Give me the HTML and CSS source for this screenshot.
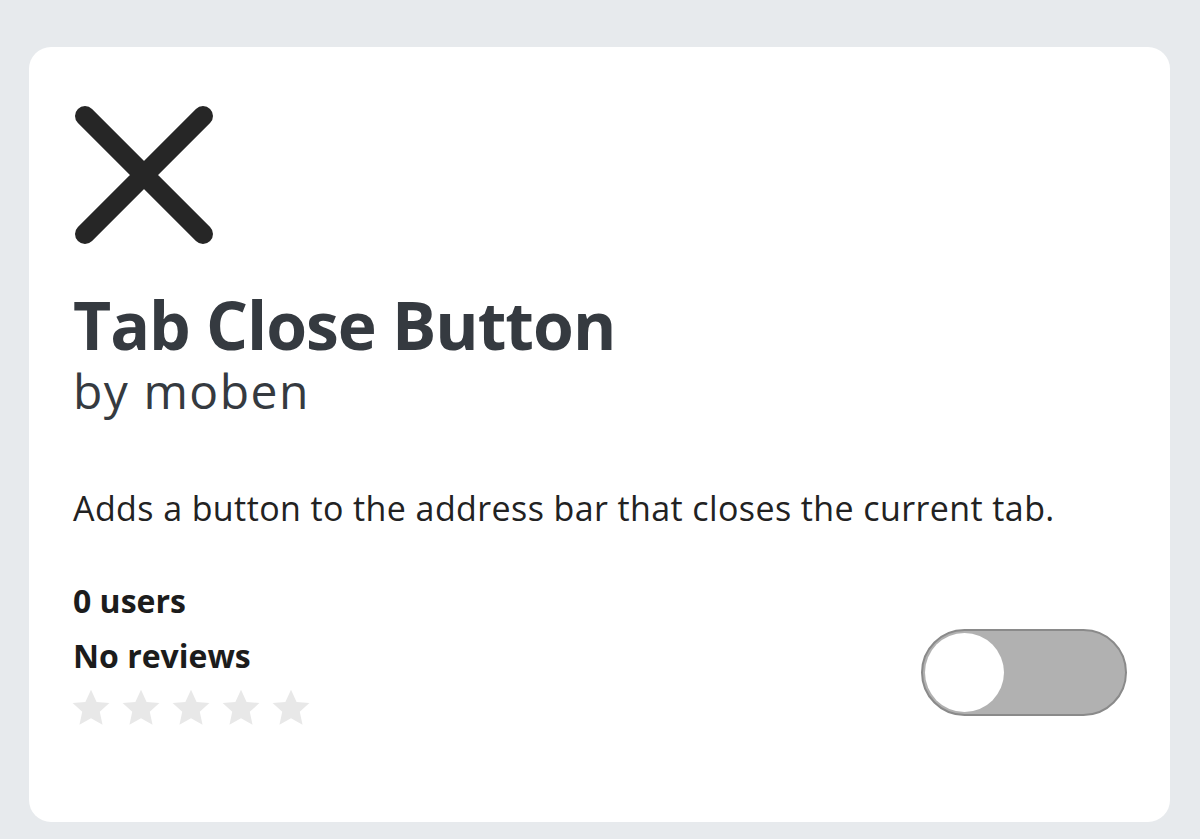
FILE: index.html
```html
<!DOCTYPE html>
<html lang="en">
<head>
  <meta charset="UTF-8" />
  <meta name="viewport" content="width=device-width, initial-scale=1.0" />
  <title>Tab Close Button</title>
  <link rel="stylesheet" href="styles.css">
</head>
<body>
  <div class="card">
    <svg class="addon-icon" width="142" height="142" viewBox="0 0 142 142">
      <path d="M12 12 L130 130 M130 12 L12 130" stroke="#262626" stroke-width="20" stroke-linecap="round" fill="none" />
    </svg>

    <h1 class="title">Tab Close Button</h1>
    <p class="author">by moben</p>

    <p class="summary">Adds a button to the address bar that closes the current tab.</p>

    <div class="footer">
      <div class="stats">
        <div class="stat">0 users</div>
        <div class="stat">No reviews</div>
        <div class="stars">
          <svg viewBox="0 0 24 24"><path d="M12 1.5l3.2 7 7.3.7-5.5 5 1.6 7.4L12 17.8l-6.6 3.8L7 14.2l-5.5-5 7.3-.7z" /></svg>
          <svg viewBox="0 0 24 24"><path d="M12 1.5l3.2 7 7.3.7-5.5 5 1.6 7.4L12 17.8l-6.6 3.8L7 14.2l-5.5-5 7.3-.7z" /></svg>
          <svg viewBox="0 0 24 24"><path d="M12 1.5l3.2 7 7.3.7-5.5 5 1.6 7.4L12 17.8l-6.6 3.8L7 14.2l-5.5-5 7.3-.7z" /></svg>
          <svg viewBox="0 0 24 24"><path d="M12 1.5l3.2 7 7.3.7-5.5 5 1.6 7.4L12 17.8l-6.6 3.8L7 14.2l-5.5-5 7.3-.7z" /></svg>
          <svg viewBox="0 0 24 24"><path d="M12 1.5l3.2 7 7.3.7-5.5 5 1.6 7.4L12 17.8l-6.6 3.8L7 14.2l-5.5-5 7.3-.7z" /></svg>
        </div>
      </div>
      <label class="toggle">
        <input type="checkbox" />
        <span class="knob"></span>
      </label>
    </div>
  </div>
</body>
</html>
```

FILE: styles.css
```css
body {
  margin: 0;
  background: #e7eaed;
  font-family: "Open Sans", "Noto Sans", sans-serif;
}
.card {
  box-sizing: border-box;
  margin: 47px 0 0 29px;
  width: 1141px;
  height: 775px;
  padding: 57px 43px 0 44px;
  background: #fff;
  border-radius: 22px;
}
.addon-icon {
  display: block;
}
.title {
  margin: 40px 0 0;
  font-size: 66px;
  line-height: 76px;
  font-weight: 700;
  color: #353a40;
  letter-spacing: -1px;
}
.author {
  margin: 0;
  font-size: 48px;
  line-height: 58px;
  letter-spacing: 1.5px;
  color: #353a40;
}
.summary {
  margin: 68px 0 0;
  font-size: 34px;
  line-height: 40px;
  letter-spacing: 0.4px;
  color: #222;
}
.footer {
  display: flex;
  justify-content: space-between;
  align-items: flex-start;
  margin-top: 45px;
}
.stat {
  font-size: 32px;
  line-height: 55px;
  font-weight: 700;
  color: #1c1c1c;
}
.stars {
  display: flex;
  gap: 8px;
  margin: 4px 0 0 -3px;
}
.stars svg {
  width: 42px;
  height: 42px;
  fill: #e8e8e8;
}
.toggle {
  position: relative;
  display: block;
  box-sizing: border-box;
  width: 206px;
  height: 87px;
  border: 2px solid #8a8a8a;
  border-radius: 44px;
  background: #b1b1b1;
  margin-top: 56px;
}
.toggle input {
  display: none;
}
.knob {
  position: absolute;
  left: 2px;
  top: 2px;
  width: 79px;
  height: 79px;
  border-radius: 50%;
  background: #fff;
}
```
